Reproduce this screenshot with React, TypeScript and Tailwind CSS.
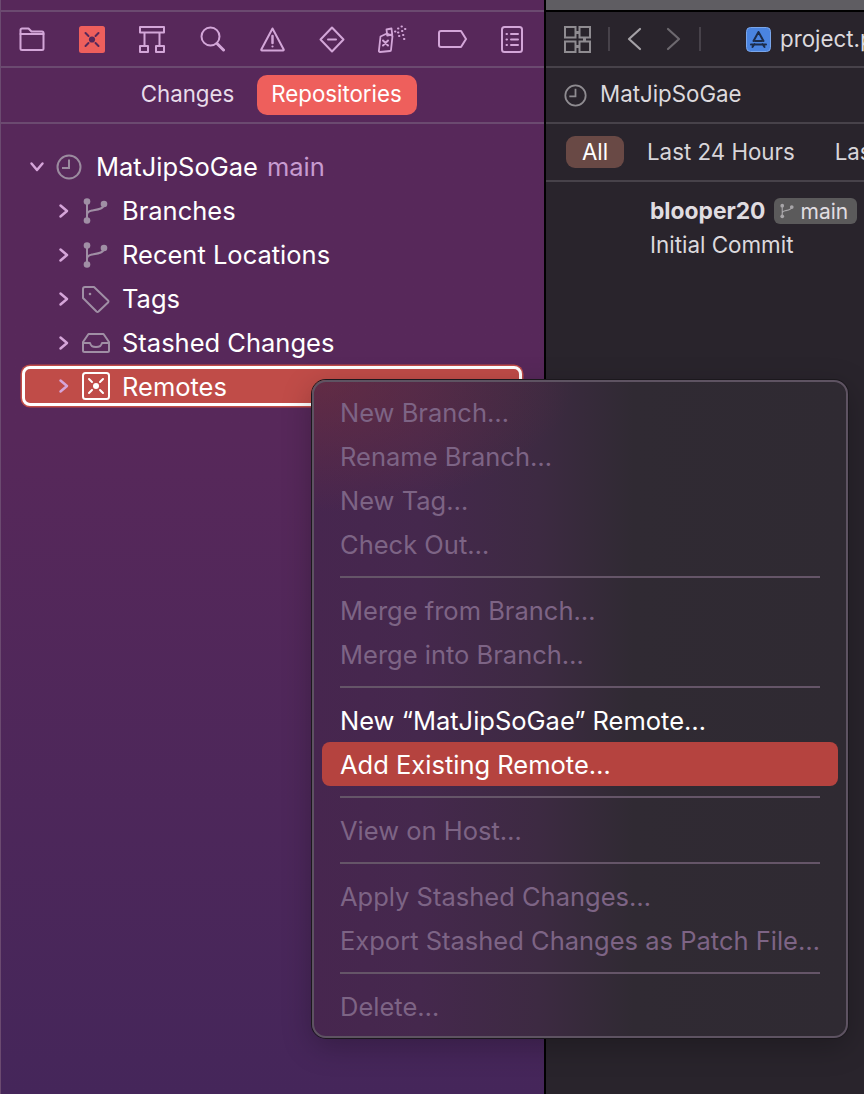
import React from "react";

const P = "#d5a5d9";

function NavIcons() {
  const c = { fill: "none", stroke: "#d3a6d8", strokeWidth: 2, strokeLinejoin: "round" as const, strokeLinecap: "round" as const };
  return (
    <div className="grid h-[56px] grid-cols-9 items-center justify-items-center border-b-2 border-[#6b4a70] px-[2px]">
      <svg width="26" height="24" viewBox="0 0 26 24" {...c}><path d="M1.500 6V3A1.500 1.500 0 0 1 3 1.500h6.500l3 3H23A1.500 1.500 0 0 1 24.500 6v15.500A1.500 1.500 0 0 1 23 23H3a1.500 1.500 0 0 1-1.500-1.500z" /><path d="M1.500 7h23" /></svg>
      <svg width="26" height="27" viewBox="0 0 26 27"><rect width="26" height="27" rx="2.500" fill="#ee5f5c" /><circle cx="13" cy="13.500" r="3.100" fill="#56285a" /><path d="M6.500 7l3 3M19.500 7l-3 3M6.500 20l3-3M19.500 20l-3-3" stroke="#56285a" strokeWidth="2" strokeLinecap="round" /></svg>
      <svg width="26" height="27" viewBox="0 0 26 27" {...c} strokeLinecap="butt"><rect x="1" y="1" width="24" height="5.500" /><path d="M5.500 6.500V20M20.500 6.500V20" /><rect x="1" y="20" width="8" height="6" /><rect x="17" y="20" width="8" height="6" /></svg>
      <svg width="25" height="26" viewBox="0 0 25 26" {...c}><circle cx="10.500" cy="10.500" r="9" /><path d="M17 17.500l6.500 6.500" strokeWidth="3" /></svg>
      <svg width="25" height="25" viewBox="0 0 25 25" {...c}><path d="M12.500 1.500L23.700 22.500a.7.7 0 0 1-.6 1H1.900a.7.7 0 0 1-.6-1z" /><path d="M12.500 9v7" strokeWidth="2.500" /><circle cx="12.500" cy="19.500" r="1.100" fill="#d3a6d8" stroke="none" /></svg>
      <svg width="26" height="27" viewBox="0 0 26 27" {...c}><path d="M13 1.500l11.500 12L13 25.500 1.500 13.500z" /><path d="M9 13.500h8" /></svg>
      <svg width="30" height="28" viewBox="0 0 30 28" fill="none" stroke="#d3a6d8" strokeLinejoin="round" strokeLinecap="round" strokeWidth="1.800">
        <path d="M3.500 11.500L10 8.500l5.500 2.500-1.500 14a1 1 0 0 1-1 1L3 27a1 1 0 0 1-1.100-1.200z" />
        <path d="M9.500 4.500l5-1 .7 6-5 1z" />
        <path d="M6 15.500l5 5M11 15.500l-5 5" strokeWidth="2" />
        <path d="M18 6.500h.4M21 3.500h.4M24.500 1.500h.4M21 7.500h.4M25 6h.4M28 4h.4M22 11h.4M26 10h.4M27 14h.4" strokeWidth="2" />
      </svg>
      <svg width="29" height="18" viewBox="0 0 29 18" {...c}><path d="M3 1h20l5 8-5 8H3a2 2 0 0 1-2-2V3a2 2 0 0 1 2-2z" /></svg>
      <svg width="22" height="27" viewBox="0 0 22 27" {...c}><rect x="1" y="1" width="20" height="25" rx="2.500" /><path d="M10 8h7M10 13.500h7M10 19h7" /><path d="M5.500 8h.5M5.500 13.500h.5M5.500 19h.5" /></svg>
    </div>
  );
}

function Clock({ color = "#9b8b9f", size = 26 }: { color?: string; size?: number }) {
  return (
    <svg width={size} height={size} viewBox="0 0 26 26" fill="none" stroke={color} strokeWidth="2" className="shrink-0">
      <circle cx="13" cy="13" r="11.500" />
      <path d="M13 5.500V14H6" />
    </svg>
  );
}

function Branch({ color = "#a08fa5", w = 25, h = 26 }: { color?: string; w?: number; h?: number }) {
  return (
    <svg width={w} height={h} viewBox="0 0 25 26" fill="none" className="shrink-0">
      <circle cx="4" cy="3.500" r="3.300" fill={color} />
      <circle cx="4" cy="22.500" r="3.300" fill={color} />
      <circle cx="21" cy="6" r="3.300" fill={color} />
      <path d="M4 3.500v19M4 17c0-3 2-4 5-4.500 6-1 12-1.500 12-6.500" stroke={color} strokeWidth="2" />
    </svg>
  );
}

function Chevron({ open = false }: { open?: boolean }) {
  return (
    <svg width="12" height="16" viewBox="0 0 12 16" fill="none" stroke={P} strokeWidth="2.500" strokeLinecap="round" strokeLinejoin="round" className={open ? "rotate-90 shrink-0" : "shrink-0"}>
      <path d="M2.500 2.500L9 8l-6.500 5.500" />
    </svg>
  );
}

function Row({ icon, label }: { icon: React.ReactNode; label: string }) {
  return (
    <div className="flex h-[44px] items-center pl-[58px]">
      <Chevron />
      <div className="ml-[11px] flex w-[29px] justify-center">{icon}</div>
      <span className="ml-[12px] text-[25.500px] leading-none text-white">{label}</span>
    </div>
  );
}

function Sidebar() {
  const g = "#a08fa5";
  return (
    <div className="flex h-full w-[544px] shrink-0 flex-col bg-gradient-to-b from-[#57285a] from-40% to-[#45265a] shadow-[inset_1px_0_0_#6b4a70]">
      <div className="h-[12px] border-b-2 border-[#6b4a70]" />
      <NavIcons />
      <div className="flex h-[56px] items-center justify-center gap-[14px] border-b-2 border-[#6b4a70] pl-[3px]">
        <span className="flex h-[40px] w-[112px] items-center justify-center pb-[2px] pl-[2px] text-[22.300px] text-[#e8dcea]">Changes</span>
        <span className="flex h-[40px] w-[160px] items-center justify-center rounded-[10px] bg-[#ee5f5c] pb-[2px] text-[22.300px] text-white">Repositories</span>
      </div>
      <div className="pt-[21px]">
        <div className="flex h-[44px] items-center pl-[29px]">
          <div className="flex w-[16px] justify-center"><Chevron open /></div>
          <div className="ml-[11px]"><Clock /></div>
          <span className="ml-[14px] text-[25.500px] leading-none text-white">MatJipSoGae</span>
          <span className="ml-[9px] text-[25.500px] leading-none text-[#c79bd0]">main</span>
        </div>
        <Row label="Branches" icon={<Branch />} />
        <Row label="Recent Locations" icon={<Branch />} />
        <Row label="Tags" icon={
          <svg width="29" height="29" viewBox="0 0 29 29" fill="none" stroke={g} strokeWidth="2" strokeLinejoin="round"><path d="M2 4a2 2 0 0 1 2-2h9l14 13.500a1.500 1.500 0 0 1 0 2L17.500 26.500a1.500 1.500 0 0 1-2 0L2 13z" /><circle cx="9" cy="9" r="1.300" fill={g} stroke="none" /></svg>
        } />
        <Row label="Stashed Changes" icon={
          <svg width="28" height="20" viewBox="0 0 28 20" fill="none" stroke={g} strokeWidth="2" strokeLinejoin="round"><path d="M1 9L6.500 1h15L27 9v8.500a1.500 1.500 0 0 1-1.500 1.500h-23A1.500 1.500 0 0 1 1 17.500z" /><path d="M1 10h7c1 3 2 4 6 4s5-1 6-4h7" /></svg>
        } />
        <div className="ml-[22px] mr-[22px] mt-[1px] flex h-[40px] items-center rounded-[8px] border-[3px] border-white bg-[#c04c48] pl-[33px] shadow-[0_0_0_1.500px_#c04c48]">
          <Chevron />
          <div className="ml-[11px] flex w-[29px] justify-center">
            <svg width="28" height="28" viewBox="0 0 28 28" fill="none" stroke="#fff" strokeWidth="2" strokeLinecap="round"><rect x="1" y="1" width="26" height="26" rx="2.500" /><circle cx="14" cy="14" r="3" fill="#fff" stroke="none" /><path d="M7 7l3 3M21 7l-3 3M7 21l3-3M21 21l-3-3" /></svg>
          </div>
          <span className="ml-[12px] pt-[2px] text-[25.500px] leading-none text-white">Remotes</span>
        </div>
      </div>
    </div>
  );
}

function Right() {
  return (
    <div className="flex h-full min-w-0 flex-1 flex-col overflow-hidden bg-[#29242c]">
      <div className="h-[12px] shrink-0 border-b-2 border-black bg-[#5f5d62]" />
      <div className="flex h-[56px] shrink-0 items-center overflow-hidden border-b-2 border-[#47424a] pl-[18px]">
        <svg width="27" height="27" viewBox="0 0 27 27" fill="none" stroke="#8f8c91" strokeWidth="2" className="shrink-0">
          <rect x="1" y="1" width="10.500" height="10.500" /><rect x="15.500" y="1" width="10.500" height="10.500" /><rect x="1" y="15.500" width="10.500" height="10.500" /><rect x="15.500" y="15.500" width="10.500" height="10.500" />
          <path d="M11.500 6.500h4M20.500 11.500v4M11.500 20.500h4" strokeWidth="3" />
        </svg>
        <div className="ml-[17px] h-[24px] w-[2px] shrink-0 bg-[#47424a]" />
        <svg className="ml-[17px] shrink-0" width="15" height="24" viewBox="0 0 15 24" fill="none" stroke="#a4a1a6" strokeWidth="2.200" strokeLinecap="round" strokeLinejoin="round"><path d="M13 2L2 12l11 10" /></svg>
        <svg className="ml-[24px] shrink-0" width="15" height="24" viewBox="0 0 15 24" fill="none" stroke="#6d696f" strokeWidth="2.200" strokeLinecap="round" strokeLinejoin="round"><path d="M2 2l11 10L2 22" /></svg>
        <div className="ml-[18px] h-[24px] w-[2px] shrink-0 bg-[#47424a]" />
        <svg className="ml-[45px] shrink-0" width="25" height="25" viewBox="0 0 25 25" fill="none"><rect x=".5" y=".5" width="24" height="24" rx="4" fill="#4a84e0" stroke="#7aa6ea" /><path d="M12.500 5L7.500 14M12.500 5l5 9M5 17.500h15M9 14h7M6.500 20l2-3M18.500 20l-2-3" stroke="#1c2c4a" strokeWidth="2" strokeLinecap="round" /></svg>
        <span className="ml-[9px] whitespace-nowrap text-[22.300px] leading-none text-[#dcd9dd]">project.pbxproj</span>
      </div>
      <div className="flex h-[56px] shrink-0 items-center border-b-2 border-[#47424a] pl-[18px]">
        <Clock color="#8f8c91" size={23} />
        <span className="ml-[13px] pb-[2px] text-[22.300px] leading-none text-[#dcd9dd]">MatJipSoGae</span>
      </div>
      <div className="flex h-[58px] shrink-0 items-center overflow-hidden whitespace-nowrap border-b-2 border-[#47424a] pl-[20px]">
        <span className="flex h-[32px] w-[58px] shrink-0 items-center justify-center rounded-[9px] bg-[#694945] text-[22.300px] text-white">All</span>
        <span className="ml-[23px] shrink-0 text-[22.300px] text-[#d8d5d9]">Last 24 Hours</span>
        <span className="ml-[40px] shrink-0 text-[22.300px] text-[#d8d5d9]">Last 7 Days</span>
      </div>
      <div className="pl-[104px] pt-[16px]">
        <div className="flex h-[26px] items-center whitespace-nowrap">
          <span className="shrink-0 text-[22.800px] font-bold leading-none text-[#e0dde1]">blooper20</span>
          <span className="ml-[9px] flex h-[26px] w-[83px] shrink-0 items-center rounded-[6px] bg-[#5b5a5b] pl-[6px] text-[21px] leading-none text-[#e0dde1]"><Branch color="#a8a6a9" w={14} h={16} /><span className="ml-[6px]">main</span></span>
        </div>
        <div className="mt-[10px] text-[22.400px] leading-none text-[#dcd9dd]">Initial Commit</div>
      </div>
    </div>
  );
}

function Item({ children, active = false }: { children: string; active?: boolean }) {
  return (
    <div className={`flex h-[44px] items-center rounded-[8px] pl-[18px] pt-[2px] text-[25.500px] leading-none text-white ${active ? "bg-[#b5433f]" : ""}`}>
      {children}
    </div>
  );
}

function Dim({ children }: { children: string }) {
  return <div className="flex h-[44px] items-center pl-[18px] pt-[2px] text-[25.500px] leading-none text-[#7d6485]">{children}</div>;
}

function Sep() {
  return (
    <div className="flex h-[22px] items-center px-[18px]">
      <div className="h-[2px] w-full bg-[#655568]" />
    </div>
  );
}

function Menu() {
  return (
    <div className="absolute left-[312px] top-[380px] h-[658px] w-[536px] rounded-[14px] border-2 border-[#5e5362] bg-[radial-gradient(ellipse_260px_130px_at_0%_0%,rgba(120,48,60,0.55),transparent),linear-gradient(90deg,#47264f_0%,#45284d_20%,#3d2a42_42%,#302a33_60%,#2f2a32_100%)] px-[8px] pt-[8px] shadow-[0_0_0_1px_#1b181d,0_8px_30px_rgba(0,0,0,0.25)]">
      <Dim>New Branch…</Dim>
      <Dim>Rename Branch…</Dim>
      <Dim>New Tag…</Dim>
      <Dim>Check Out…</Dim>
      <Sep />
      <Dim>Merge from Branch…</Dim>
      <Dim>Merge into Branch…</Dim>
      <Sep />
      <Item>New “MatJipSoGae” Remote…</Item>
      <Item active>Add Existing Remote…</Item>
      <Sep />
      <Dim>View on Host…</Dim>
      <Sep />
      <Dim>Apply Stashed Changes…</Dim>
      <Dim>Export Stashed Changes as Patch File…</Dim>
      <Sep />
      <Dim>Delete…</Dim>
    </div>
  );
}

export default function App() {
  return (
    <div className="relative flex h-[1094px] w-[864px] overflow-hidden font-['Inter',sans-serif]">
      <Sidebar />
      <div className="h-full w-[2px] shrink-0 bg-black" />
      <Right />
      <Menu />
    </div>
  );
}
